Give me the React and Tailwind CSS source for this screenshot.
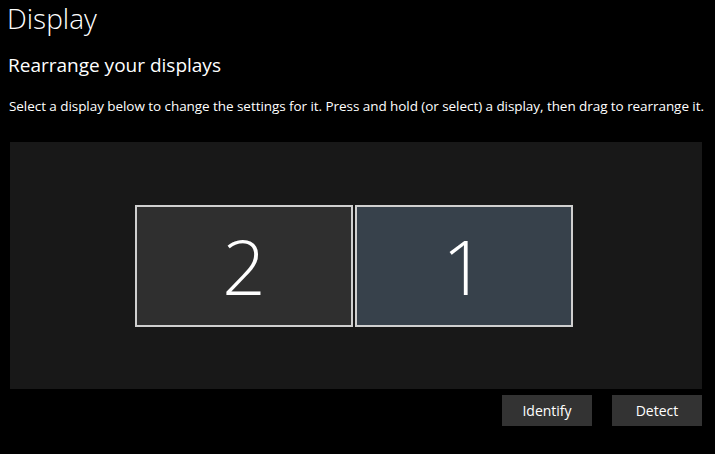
export default function App() {
  return (
    <div
      className="w-[715px] h-[454px] bg-black text-white overflow-hidden"
      style={{ fontFamily: '"Open Sans", "Noto Sans", sans-serif' }}
    >
      <h1 className="pl-[7px] pt-0 text-[28px] font-light leading-[36px]">Display</h1>
      <h2 className="pl-[8px] mt-[16px] text-[19px] font-normal leading-[26px]">
        Rearrange your displays
      </h2>
      <p className="pl-[9px] mt-[19px] text-[13.5px] leading-[18px] tracking-[-0.06px] whitespace-nowrap">
        Select a display below to change the settings for it. Press and hold (or select) a display, then drag to rearrange it.
      </p>
      <div className="ml-[10px] mt-[27px] w-[692px] h-[247px] bg-[#181818] flex items-center justify-center">
        <div className="flex gap-[2px] pr-[4px] pt-[1px]">
          <div className="w-[218px] h-[122px] bg-[#2f2f2f] border-2 border-[#cfcfcf] flex items-center justify-center">
            <span className="text-[76px] font-light leading-none">2</span>
          </div>
          <div className="w-[218px] h-[122px] bg-[#37414b] border-2 border-[#cfcfcf] flex items-center justify-center">
            <span className="text-[76px] font-light leading-none">1</span>
          </div>
        </div>
      </div>
      <div className="flex justify-end gap-[20px] mt-[6px] pr-[13px]">
        <button className="w-[90px] h-[31px] bg-[#333333] text-[14px] text-white">Identify</button>
        <button className="w-[90px] h-[31px] bg-[#333333] text-[14px] text-white">Detect</button>
      </div>
    </div>
  );
}
